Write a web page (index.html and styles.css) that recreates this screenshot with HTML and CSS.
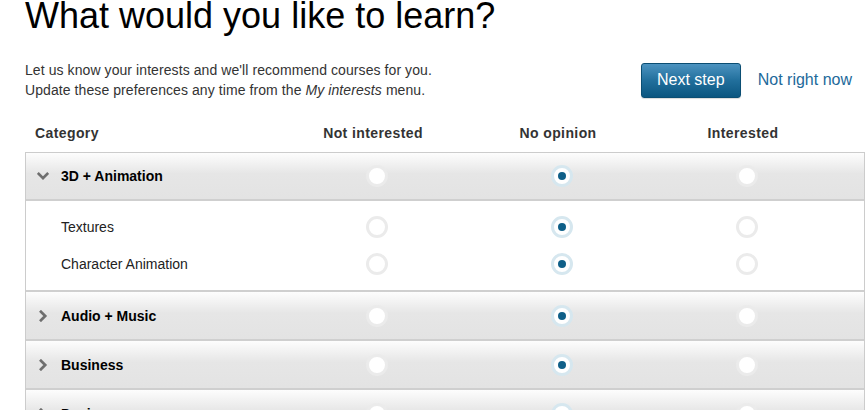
FILE: index.html
```html
<!DOCTYPE html>
<html lang="en">
<head>
<meta charset="utf-8">
<title>What would you like to learn?</title>
<link rel="stylesheet" href="styles.css">
</head>
<body>
<div class="page">
  <h1 class="title">What would you like to learn?</h1>
  <div class="intro">
    <p class="intro-text">Let us know your interests and we'll recommend courses for you.<br>Update these preferences any time from the <em>My interests</em> menu.</p>
    <div class="actions">
      <button class="btn-primary" type="button">Next step</button>
      <a class="link" href="#">Not right now</a>
    </div>
  </div>

  <div class="grid head">
    <div class="head-cat">Category</div>
    <div class="head-col">Not interested</div>
    <div class="head-col">No opinion</div>
    <div class="head-col">Interested</div>
  </div>

  <div class="table">
    <div class="grid cat-row">
      <div class="cat-name">
        <svg class="chev" width="12" height="12" viewBox="0 0 12 12"><polyline points="0.8,3 6,8.2 11.2,3" /></svg>
        <span>3D + Animation</span>
      </div>
      <div class="cell"><input class="radio" type="radio" name="r1"></div>
      <div class="cell"><input class="radio" type="radio" name="r1" checked></div>
      <div class="cell"><input class="radio" type="radio" name="r1"></div>
    </div>
    <div class="subrows">
      <div class="grid sub-row">
        <div class="sub-name">Textures</div>
        <div class="cell"><input class="radio" type="radio" name="r2"></div>
        <div class="cell"><input class="radio" type="radio" name="r2" checked></div>
        <div class="cell"><input class="radio" type="radio" name="r2"></div>
      </div>
      <div class="grid sub-row">
        <div class="sub-name">Character Animation</div>
        <div class="cell"><input class="radio" type="radio" name="r3"></div>
        <div class="cell"><input class="radio" type="radio" name="r3" checked></div>
        <div class="cell"><input class="radio" type="radio" name="r3"></div>
      </div>
    </div>
    <div class="grid cat-row">
      <div class="cat-name">
        <svg class="chev" width="12" height="12" viewBox="0 0 12 12"><polyline points="3,0.8 8.2,6 3,11.2" /></svg>
        <span>Audio + Music</span>
      </div>
      <div class="cell"><input class="radio" type="radio" name="r4"></div>
      <div class="cell"><input class="radio" type="radio" name="r4" checked></div>
      <div class="cell"><input class="radio" type="radio" name="r4"></div>
    </div>
    <div class="grid cat-row">
      <div class="cat-name">
        <svg class="chev" width="12" height="12" viewBox="0 0 12 12"><polyline points="3,0.8 8.2,6 3,11.2" /></svg>
        <span>Business</span>
      </div>
      <div class="cell"><input class="radio" type="radio" name="r5"></div>
      <div class="cell"><input class="radio" type="radio" name="r5" checked></div>
      <div class="cell"><input class="radio" type="radio" name="r5"></div>
    </div>
    <div class="grid cat-row">
      <div class="cat-name">
        <svg class="chev" width="12" height="12" viewBox="0 0 12 12"><polyline points="3,0.8 8.2,6 3,11.2" /></svg>
        <span>Design</span>
      </div>
      <div class="cell"><input class="radio" type="radio" name="r6"></div>
      <div class="cell"><input class="radio" type="radio" name="r6" checked></div>
      <div class="cell"><input class="radio" type="radio" name="r6"></div>
    </div>
  </div>
</div>
</body>
</html>
```

FILE: styles.css
```css
html, body {
  margin: 0;
  padding: 0;
  overflow: hidden;
  background: #fff;
}
body {
  font-family: "Liberation Sans", Arial, sans-serif;
  color: #333;
}
.page {
  width: 840px;
  padding-left: 25px;
}
.title {
  margin: -5px 0 0;
  font-size: 36px;
  line-height: 42px;
  font-weight: normal;
  color: #000;
}
.intro {
  margin-top: 23px;
  display: flex;
  justify-content: space-between;
  align-items: center;
}
.intro-text {
  margin: 0;
  font-size: 14px;
  line-height: 20px;
  letter-spacing: 0.08px;
  color: #333;
}
.intro-text em {
  font-style: italic;
}
.actions {
  display: flex;
  align-items: center;
  gap: 17px;
  margin-right: 13px;
}
.btn-primary {
  height: 35px;
  width: 100px;
  padding: 0;
  border: 1px solid #0b4e73;
  border-radius: 3px;
  background: linear-gradient(#4c93c0, #216f9c 50%, #0b5680);
  color: #fff;
  font-family: "Liberation Sans", Arial, sans-serif;
  font-size: 16px;
  box-shadow: 0 1px 1px rgba(0,0,0,0.15);
}
.link {
  color: #22699a;
  font-size: 16px;
  text-decoration: none;
}
.grid {
  display: grid;
  grid-template-columns: 258px 185px 185px 185px 1fr;
  align-items: center;
}
.head {
  margin-top: 23px;
  padding-left: 1px;
  height: 20px;
  margin-bottom: 9px;
  font-size: 14px;
  font-weight: bold;
  letter-spacing: 0.4px;
  color: #333;
  line-height: 20px;
}
.head-cat {
  padding-left: 9px;
}
.head-col {
  text-align: center;
  padding-right: 7px;
}
.table {
  border: 1px solid #cccccc;
  border-bottom: none;
}
.cat-row {
  height: 47px;
  border-bottom: 2px solid #cfcfcf;
  background: linear-gradient(#fdfdfd, #e6e6e6 45%, #e3e3e3);
}
.cat-row:first-child {
  height: 46px;
}
.cat-name {
  display: flex;
  align-items: center;
  gap: 12px;
  padding-left: 11px;
  font-size: 14px;
  font-weight: bold;
  color: #000;
}
.chev {
  display: block;
  fill: none;
  stroke: #6e6e6e;
  stroke-width: 2.7;
}
.subrows {
  padding: 7px 0 8px;
  background: #fff;
  border-bottom: 2px solid #cfcfcf;
}
.sub-row {
  height: 37px;
}
.sub-name {
  padding-left: 35px;
  font-size: 14px;
  color: #222;
}
.cell {
  display: flex;
  justify-content: center;
}
.radio {
  appearance: none;
  -webkit-appearance: none;
  margin: 0;
  width: 22px;
  height: 22px;
  border-radius: 50%;
  border: 3px solid #ebebeb;
  background: #fff;
  position: relative;
  box-sizing: border-box;
}
.radio:checked {
  border-color: #d6e7ef;
}
.radio:checked::after {
  content: "";
  position: absolute;
  left: 4px;
  top: 4px;
  width: 8px;
  height: 8px;
  border-radius: 50%;
  background: #0f5f88;
}
```
